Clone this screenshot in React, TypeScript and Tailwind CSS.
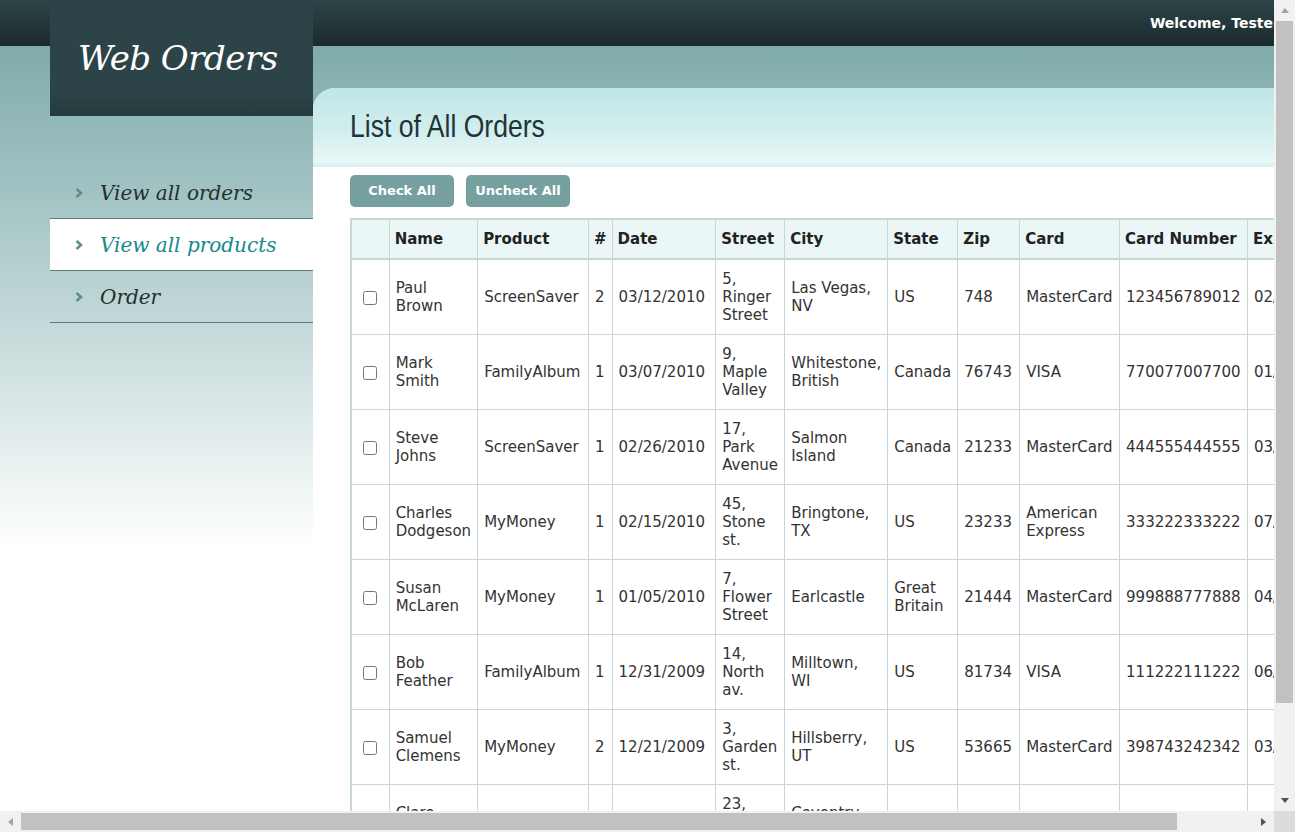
import React from 'react';

type Order = {
  name: string;
  product: string;
  qty: number;
  date: string;
  street: string;
  city: string;
  state: string;
  zip: string;
  card: string;
  number: string;
  exp: string;
};

const orders: Order[] = [
  { name: 'Paul Brown', product: 'ScreenSaver', qty: 2, date: '03/12/2010', street: '5, Ringer Street', city: 'Las Vegas, NV', state: 'US', zip: '748', card: 'MasterCard', number: '123456789012', exp: '02/24' },
  { name: 'Mark Smith', product: 'FamilyAlbum', qty: 1, date: '03/07/2010', street: '9, Maple Valley', city: 'Whitestone, British', state: 'Canada', zip: '76743', card: 'VISA', number: '770077007700', exp: '01/11' },
  { name: 'Steve Johns', product: 'ScreenSaver', qty: 1, date: '02/26/2010', street: '17, Park Avenue', city: 'Salmon Island', state: 'Canada', zip: '21233', card: 'MasterCard', number: '444555444555', exp: '03/11' },
  { name: 'Charles Dodgeson', product: 'MyMoney', qty: 1, date: '02/15/2010', street: '45, Stone st.', city: 'Bringtone, TX', state: 'US', zip: '23233', card: 'American Express', number: '333222333222', exp: '07/11' },
  { name: 'Susan McLaren', product: 'MyMoney', qty: 1, date: '01/05/2010', street: '7, Flower Street', city: 'Earlcastle', state: 'Great Britain', zip: '21444', card: 'MasterCard', number: '999888777888', exp: '04/12' },
  { name: 'Bob Feather', product: 'FamilyAlbum', qty: 1, date: '12/31/2009', street: '14, North av.', city: 'Milltown, WI', state: 'US', zip: '81734', card: 'VISA', number: '111222111222', exp: '06/12' },
  { name: 'Samuel Clemens', product: 'MyMoney', qty: 2, date: '12/21/2009', street: '3, Garden st.', city: 'Hillsberry, UT', state: 'US', zip: '53665', card: 'MasterCard', number: '398743242342', exp: '03/11' },
  { name: 'Clare Jefferson', product: 'FamilyAlbum', qty: 3, date: '12/04/2009', street: '23, Rose Street', city: 'Coventry, UK', state: 'US', zip: '81843', card: 'VISA', number: '567567567567', exp: '02/12' },
];

const navItems = ['View all orders', 'View all products', 'Order'];

// little triangle used by the window scrollbar arrows
const Arrow = ({ dir, color }: { dir: 'up' | 'down' | 'left' | 'right'; color: string }) => {
  const d = {
    up: 'M0 5 L4 0 L8 5 Z',
    down: 'M0 0 L8 0 L4 5 Z',
    left: 'M5 0 L5 8 L0 4 Z',
    right: 'M0 0 L5 4 L0 8 Z',
  }[dir];
  const vertical = dir === 'up' || dir === 'down';
  return (
    <svg width={vertical ? 8 : 5} height={vertical ? 5 : 8} viewBox={vertical ? '0 0 8 5' : '0 0 5 8'}>
      <path d={d} fill={color} />
    </svg>
  );
};

export default function App() {
  const serif = "font-['DejaVu_Serif',Georgia,serif] italic";
  const sans = "font-['DejaVu_Sans',Verdana,sans-serif]";

  return (
    <div className="relative w-[1295px] h-[832px] overflow-hidden">
      <div
        className={`w-[1358px] min-h-[915px] flex ${sans} bg-[linear-gradient(to_bottom,#2c4548_0px,#1c2a2c_46px,#80abab_46px,#a4c4c4_200px,#ffffff_550px)]`}
      >
        {/* Left column: logo + navigation */}
        <div className="ml-[50px] w-[263px] shrink-0 flex flex-col">
          <div className="h-[116px] flex items-center pl-[28px] bg-[linear-gradient(to_bottom,#2c4448_0px,#2c4448_90px,#253a3d_116px)]">
            <span className={`${serif} text-white text-[34px] tracking-[-0.5px]`}>Web Orders</span>
          </div>
          <nav className="mt-[51px] flex flex-col">
            {navItems.map((item, i) => {
              const active = i === 1;
              return (
                <a
                  key={item}
                  href="#"
                  className={`h-[52px] flex items-center border-b border-[#5c7c7d] ${active ? 'bg-white' : ''}`}
                >
                  <span className="w-[50px] pl-[25px] flex items-center">
                    <svg width="8" height="10" viewBox="0 0 8 10">
                      <path d="M1.5 1 L6 5 L1.5 9" fill="none" stroke="#5e8f90" strokeWidth="2.6" />
                    </svg>
                  </span>
                  <span className={`${serif} text-[20px] pt-[1px] ${active ? 'text-[#17898c]' : 'text-[#22302f]'}`}>{item}</span>
                </a>
              );
            })}
          </nav>
        </div>

        {/* Right column */}
        <div className="flex-1 flex flex-col">
          <div className="h-[46px] flex items-center justify-end pr-[2px] pt-[1px] text-white text-[14px] font-bold">
            Welcome, Tester! | Logout
          </div>
          <div className="mt-[42px] flex-1 bg-white rounded-tl-[22px] overflow-hidden">
            <div className="h-[79px] flex items-center pl-[37px] pb-[3px] bg-[linear-gradient(to_bottom,#c0e6e6_0%,#d2eeee_55%,#e9f7f7_92%,#d8eeee_100%)]">
              <h1 className="font-['Liberation_Sans',Arial,sans-serif] text-[32px] text-[#1f3436] scale-x-[0.83] origin-left">
                List of All Orders
              </h1>
            </div>
            <div className="pl-[37px] pr-[18px] pt-[8px] pb-[55px]">
              <div className="flex gap-[12px]">
                <button className="w-[104px] h-[32px] rounded-[5px] bg-[#76a0a0] text-white text-[13px] font-bold">
                  Check All
                </button>
                <button className="w-[104px] h-[32px] rounded-[5px] bg-[#76a0a0] text-white text-[13px] font-bold">
                  Uncheck All
                </button>
              </div>
              <table className="mt-[11px] table-fixed border-collapse border-2 border-[#c7d6d6] text-[15px] leading-[18px] text-[#333333]">
                <colgroup>
                  <col className="w-[40px]" />
                  <col className="w-[88px]" />
                  <col className="w-[111px]" />
                  <col className="w-[23px]" />
                  <col className="w-[104px]" />
                  <col className="w-[69px]" />
                  <col className="w-[103px]" />
                  <col className="w-[70px]" />
                  <col className="w-[62px]" />
                  <col className="w-[100px]" />
                  <col className="w-[128px]" />
                  <col className="w-[60px]" />
                  <col className="w-[33px]" />
                </colgroup>
                <thead>
                  <tr className="h-[40px] bg-[#ebf7f7] text-left text-[#222]">
                    {['', 'Name', 'Product', '#', 'Date', 'Street', 'City', 'State', 'Zip', 'Card', 'Card Number', 'Exp', ''].map((h, i) => (
                      <th key={i} className="border border-b-2 border-[#c7d6d6] px-[5px] font-bold text-[15px]">
                        {h}
                      </th>
                    ))}
                  </tr>
                </thead>
                <tbody>
                  {orders.map((o) => (
                    <tr key={o.name} className="h-[75px]">
                      <td className="border border-[#c7d6d6] text-center align-middle">
                        <input type="checkbox" className="w-[14px] h-[14px] align-middle" />
                      </td>
                      {[o.name, o.product, String(o.qty), o.date, o.street, o.city, o.state, o.zip, o.card, o.number, o.exp].map((v, i) => (
                        <td key={i} className="border border-[#c7d6d6] px-[6px] py-[10px] align-middle">
                          {v}
                        </td>
                      ))}
                      <td className="border border-[#c7d6d6] text-center align-middle">
                        <svg width="14" height="14" viewBox="0 0 14 14" className="inline-block">
                          <path d="M2 12 L3 9 L10 2 L12 4 L5 11 Z" fill="#f2c94c" stroke="#8a6d1f" strokeWidth="1" />
                        </svg>
                      </td>
                    </tr>
                  ))}
                </tbody>
              </table>
            </div>
          </div>
        </div>
      </div>

      {/* Window scrollbars (drawn over the page edge) */}
      <div className="absolute right-0 top-0 w-[21px] h-[811px] bg-[#f1f1f1] flex flex-col items-center">
        <div className="h-[21px] flex items-center justify-center">
          <Arrow dir="up" color="#a3a3a3" />
        </div>
        <div className="w-[17px] h-[682px] bg-[#c1c1c1]" />
        <div className="flex-1" />
        <div className="h-[21px] flex items-center justify-center">
          <Arrow dir="down" color="#505050" />
        </div>
      </div>
      <div className="absolute left-0 bottom-0 w-[1274px] h-[21px] bg-[#f1f1f1] flex items-center">
        <div className="w-[21px] flex items-center justify-center">
          <Arrow dir="left" color="#a3a3a3" />
        </div>
        <div className="w-[1156px] h-[17px] bg-[#c1c1c1]" />
        <div className="flex-1" />
        <div className="w-[21px] flex items-center justify-center">
          <Arrow dir="right" color="#505050" />
        </div>
      </div>
      <div className="absolute right-0 bottom-0 w-[21px] h-[21px] bg-[#dcdcdc]" />
    </div>
  );
}
